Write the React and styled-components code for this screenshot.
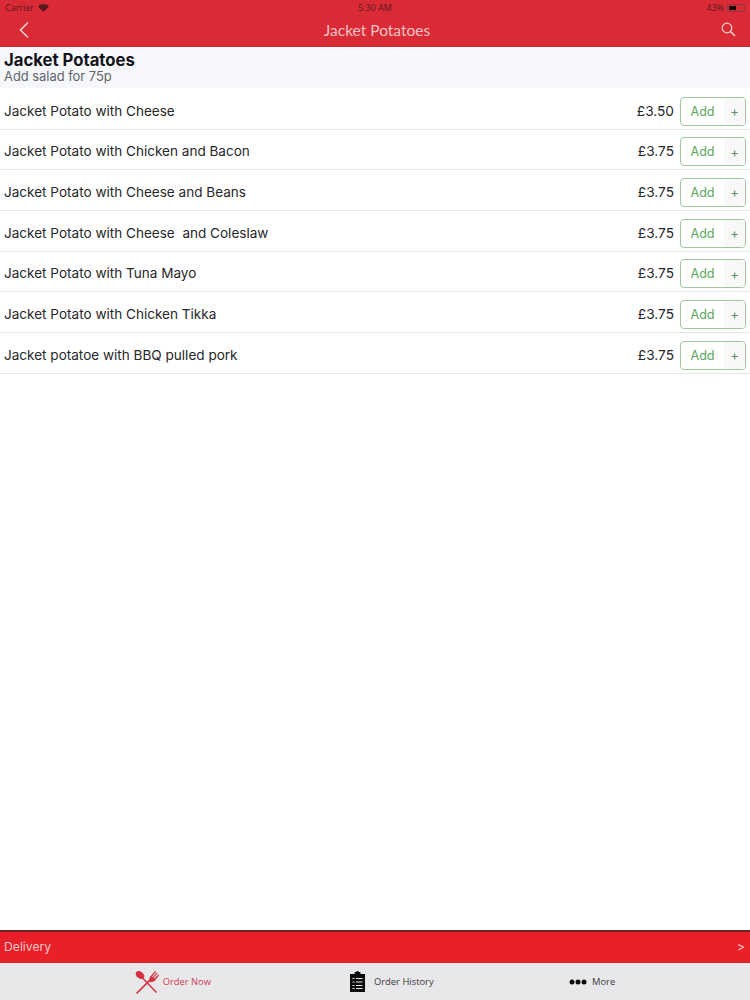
import { createGlobalStyle } from "styled-components";
import styled from "styled-components";

const GlobalStyle = createGlobalStyle`
  html, body {
    margin: 0;
    padding: 0;
    background: #fff;
  }
  * {
    box-sizing: border-box;
  }
`;

const items = [
  { name: "Jacket Potato with Cheese", price: "£3.50" },
  { name: "Jacket Potato with Chicken and Bacon", price: "£3.75" },
  { name: "Jacket Potato with Cheese and Beans", price: "£3.75" },
  { name: "Jacket Potato with Cheese  and Coleslaw", price: "£3.75" },
  { name: "Jacket Potato with Tuna Mayo", price: "£3.75" },
  { name: "Jacket Potato with Chicken Tikka", price: "£3.75" },
  { name: "Jacket potatoe with BBQ pulled pork", price: "£3.75" },
];

const Page = styled.div`
  width: 750px;
  height: 1000px;
  display: flex;
  flex-direction: column;
  font-family: Inter, "Open Sans", sans-serif;
  overflow: hidden;
  background: #fff;
`;

const TopBar = styled.header`
  height: 47px;
  background: #da2a35;
  border-bottom: 1px solid #c92731;
  display: flex;
  flex-direction: column;
  flex-shrink: 0;
`;

const StatusBar = styled.div`
  height: 15px;
  padding: 0 5px 0 5px;
  display: grid;
  grid-template-columns: 1fr auto 1fr;
  align-items: center;
  font-family: "Open Sans", sans-serif;
  font-size: 9px;
  color: #5a1a20;
`;

const StatusLeft = styled.div`
  display: flex;
  align-items: center;
  gap: 4px;
`;

const StatusRight = styled.div`
  display: flex;
  align-items: center;
  justify-content: flex-end;
  gap: 3px;
`;

const Battery = styled.div`
  width: 18px;
  height: 8px;
  border: 1px solid #8a3a40;
  border-radius: 2px;
  padding: 1px;
  display: flex;
`;

const BatteryFill = styled.div`
  width: 50%;
  background: #1a0608;
`;

const NavRow = styled.div`
  flex: 1;
  padding: 0 14px 2px 18px;
  display: grid;
  grid-template-columns: 40px 1fr 40px;
  align-items: center;
`;

const NavTitle = styled.div`
  text-align: center;
  color: #f3c4c6;
  font-family: Lato, sans-serif;
  font-size: 15.5px;
`;

const NavSearch = styled.div`
  display: flex;
  justify-content: flex-end;
`;

const SectionHead = styled.div`
  height: 41px;
  flex-shrink: 0;
  padding: 4px 4px 0;
  background: #f6f7fa;
`;

const SectionTitle = styled.div`
  font-size: 16.7px;
  line-height: 18px;
  font-weight: 700;
  color: #14141a;
`;

const SectionSub = styled.div`
  font-size: 12.9px;
  line-height: 16px;
  color: #62656b;
`;

const List = styled.div`
  flex: 1;
  padding-top: 1px;
`;

const Row = styled.div`
  height: 40.67px;
  padding: 0 4px 3px;
  display: flex;
  align-items: flex-end;
  border-bottom: 1px solid #e6e6e8;
`;

const ItemName = styled.div`
  flex: 1;
  line-height: 29px;
  font-size: 13.55px;
  color: #27272b;
  white-space: pre;
`;

const Price = styled.div`
  font-size: 13.7px;
  line-height: 29px;
  color: #27272b;
  margin-right: 6px;
`;

const AddButton = styled.div`
  width: 66px;
  height: 29px;
  border: 1px solid #9cc79f;
  border-radius: 4px;
  display: flex;
  overflow: hidden;
  color: #5aa660;
`;

const AddLabel = styled.div`
  flex: 1;
  display: flex;
  align-items: center;
  justify-content: center;
  font-size: 12.6px;
`;

const AddPlus = styled.div`
  width: 21px;
  background: #f7f8f7;
  display: flex;
  align-items: center;
  justify-content: center;
  font-size: 13px;
  color: #5f8f64;
`;

const DeliveryBar = styled.div`
  height: 33px;
  flex-shrink: 0;
  padding: 0 5px 2px 4px;
  background: #e82029;
  border-top: 2px solid #6e2528;
  display: flex;
  align-items: center;
  justify-content: space-between;
  color: #f6c5c8;
  font-size: 12.2px;
`;

const TabBar = styled.nav`
  height: 37px;
  flex-shrink: 0;
  background: #e8e8ea;
  display: grid;
  grid-template-columns: 292px 210px 1fr;
  align-items: center;
`;

const Tab = styled.div`
  display: flex;
  align-items: center;
  justify-content: ${(p) => p.$justify || "flex-start"};
  gap: ${(p) => p.$gap || 5}px;
  padding-left: ${(p) => p.$left || 0}px;
  padding-right: ${(p) => p.$right || 0}px;
  font-family: "Open Sans", sans-serif;
  font-size: 9.4px;
  color: ${(p) => (p.$active ? "#cf3a4c" : "#3a3a3e")};
`;

function Wifi() {
  return (
    <svg width="11" height="8" viewBox="0 0 11 8">
      <path d="M5.5 8 0 2.5C3 -.7 8 -.7 11 2.5Z" fill="#5a1a20" />
    </svg>
  );
}

function Back() {
  return (
    <svg width="12" height="18" viewBox="0 0 12 18" fill="none">
      <path d="M10 1.5 2.5 9l7.5 7.5" stroke="#f6d3d5" strokeWidth="1.6" />
    </svg>
  );
}

function Search() {
  return (
    <svg width="15" height="15" viewBox="0 0 15 15" fill="none" stroke="#f6d3d5">
      <circle cx="6" cy="6" r="4.8" strokeWidth="1.2" />
      <path d="M9.5 9.5 14 14" strokeWidth="1.6" />
    </svg>
  );
}

function CutleryIcon() {
  return (
    <svg width="24" height="24" viewBox="0 0 24 24" fill="#d4303f">
      <path d="M22 23 8 8.5 7 9.5 21 24Z" transform="translate(0 -1)" />
      <ellipse cx="5" cy="5" rx="4.8" ry="3.4" transform="rotate(40 5 5)" />
      <path d="M1 23 15 8.8l1.2 1.2L2.2 24Z" />
      <path d="M14.5 7.5 20 1l1 .8-4 4.6.8.7 4-4.6.8.7-4 4.6.7.7 4.5-4.3.7.8-5.4 6.6-2.4.2-1.5 1Z" />
    </svg>
  );
}

function ClipboardIcon() {
  return (
    <svg width="15" height="21" viewBox="0 0 15 21">
      <path d="M0 3h4.5V1.5L7.5 0l3 1.5V3H15v18H0Z" fill="#0c0c0e" />
      <path
        d="M2.5 7h2v1h-2ZM6 7h6.5v1H6ZM2.5 10.5h2v1h-2ZM6 10.5h6.5v1H6ZM2.5 14h2v1h-2ZM6 14h6.5v1H6ZM2.5 17h2v1h-2ZM6 17h6.5v1H6Z"
        fill="#e8e8ea"
      />
    </svg>
  );
}

function DotsIcon() {
  return (
    <svg width="18" height="6" viewBox="0 0 18 6" fill="#0c0c0e">
      <circle cx="3" cy="3" r="2.5" />
      <circle cx="9" cy="3" r="2.5" />
      <circle cx="15" cy="3" r="2.5" />
    </svg>
  );
}

export default function App() {
  return (
    <Page>
      <GlobalStyle />
      <TopBar>
        <StatusBar>
          <StatusLeft>
            Carrier <Wifi />
          </StatusLeft>
          <div>5:30 AM</div>
          <StatusRight>
            43%
            <Battery>
              <BatteryFill />
            </Battery>
          </StatusRight>
        </StatusBar>
        <NavRow>
          <Back />
          <NavTitle>Jacket Potatoes</NavTitle>
          <NavSearch>
            <Search />
          </NavSearch>
        </NavRow>
      </TopBar>
      <SectionHead>
        <SectionTitle>Jacket Potatoes</SectionTitle>
        <SectionSub>Add salad for 75p</SectionSub>
      </SectionHead>
      <List>
        {items.map((item) => (
          <Row key={item.name}>
            <ItemName>{item.name}</ItemName>
            <Price>{item.price}</Price>
            <AddButton>
              <AddLabel>Add</AddLabel>
              <AddPlus>+</AddPlus>
            </AddButton>
          </Row>
        ))}
      </List>
      <DeliveryBar>
        <span>Delivery</span>
        <span>&gt;</span>
      </DeliveryBar>
      <TabBar>
        <Tab $active $justify="flex-end" $gap={4} $right={81}>
          <CutleryIcon />
          Order Now
        </Tab>
        <Tab $left={58} $gap={9}>
          <ClipboardIcon />
          Order History
        </Tab>
        <Tab $left={67} $gap={5}>
          <DotsIcon />
          More
        </Tab>
      </TabBar>
    </Page>
  );
}
